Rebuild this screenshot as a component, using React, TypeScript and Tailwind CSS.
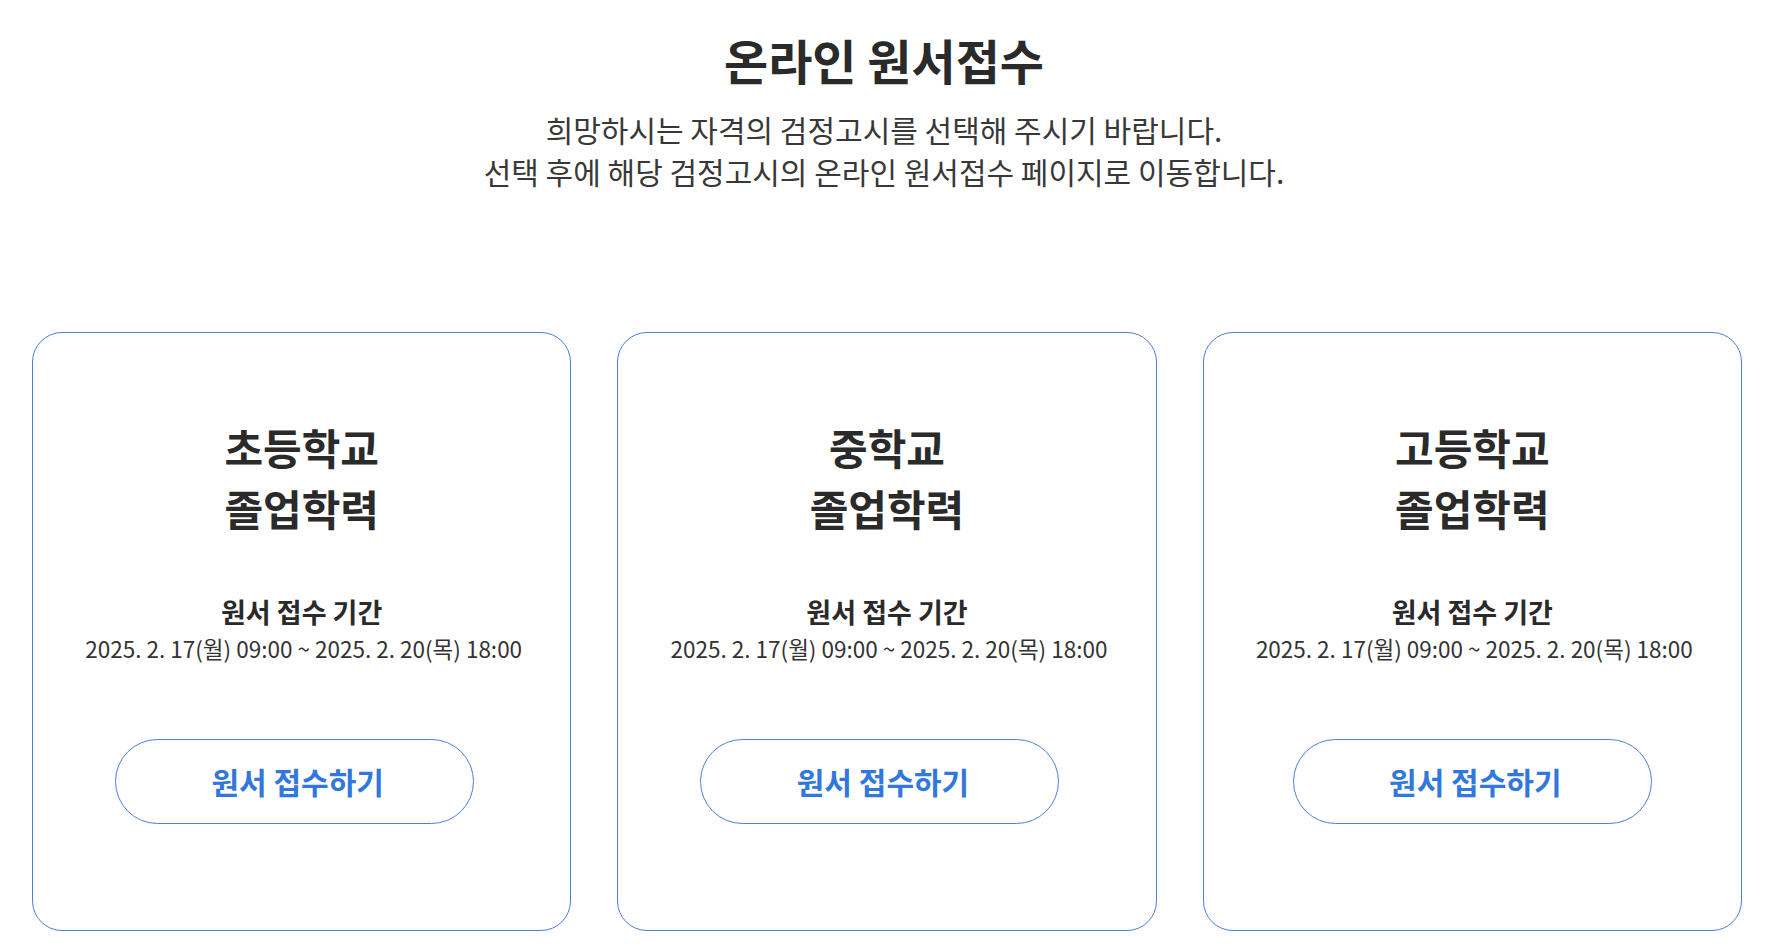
const FONT = "font-['Noto_Sans_CJK_KR','Noto_Sans',sans-serif]";

const COURSES = [
  { level: '초등학교', shift: true },
  { level: '중학교', shift: true },
  { level: '고등학교', shift: false },
];

const PERIOD = '2025. 2. 17(월) 09:00 ~ 2025. 2. 20(목) 18:00';

function CourseCard({ level, shift }: { level: string; shift: boolean }) {
  return (
    <div className="h-[599px] rounded-[30px] border border-[#4a80d6] bg-white pt-[83px] flex flex-col items-center">
      {/* Title */}
      <h2 className="text-[42px] leading-[61px] font-bold text-[#2a2a2a] text-center">
        {level}
        <br />
        졸업학력
      </h2>

      {/* Period */}
      <p className="mt-[55px] text-[27px] leading-[37.5px] font-bold text-[#2a2a2a]">원서 접수 기간</p>
      <p className="mt-[2px] pl-[4px] text-[22.5px] leading-[33px] text-[#333]">{PERIOD}</p>

      {/* Apply button */}
      <button
        className={`mt-[74px] w-[359px] h-[85px] rounded-full border border-[#4a80d6] bg-white pl-[6px] text-[30px] font-bold text-[#3177dc] ${
          shift ? '-translate-x-[7px]' : ''
        }`}
      >
        원서 접수하기
      </button>
    </div>
  );
}

export default function App() {
  return (
    <div className={`${FONT} min-h-[952px] bg-white pt-[31px] text-[#2a2a2a]`}>
      {/* Header */}
      <h1 className="text-center text-[48px] leading-[57.6px] font-bold text-[#2a2a2a]">온라인 원서접수</h1>
      <div className="mt-[19px] text-center text-[30px] leading-[42px] text-[#383838]">
        <p>희망하시는 자격의 검정고시를 선택해 주시기 바랍니다.</p>
        <p>선택 후에 해당 검정고시의 온라인 원서접수 페이지로 이동합니다.</p>
      </div>

      {/* Cards */}
      <div className="mt-[140px] ml-[32px] w-[1710px] grid grid-cols-3 gap-[46px]">
        {COURSES.map((c) => (
          <CourseCard key={c.level} level={c.level} shift={c.shift} />
        ))}
      </div>
    </div>
  );
}
